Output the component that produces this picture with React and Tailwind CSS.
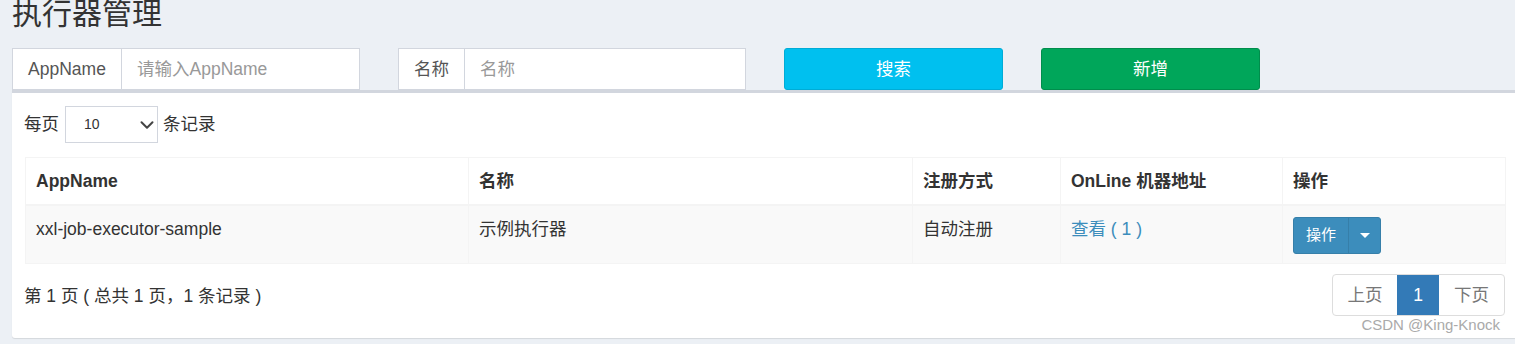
import { ChevronDown } from "lucide-react";

const font = { fontFamily: '"Liberation Sans", Arial, "Noto Sans CJK SC", sans-serif' };

const columns = [
    { label: "AppName", width: 443 },
    { label: "名称", width: 444 },
    { label: "注册方式", width: 148 },
    { label: "OnLine 机器地址", width: 222 },
    { label: "操作", width: 223 },
];

const SearchGroup = ({ addon, addonWidth, placeholder }) => (
    <div className="flex w-[348px] h-[42px] border border-[#d2d6de] bg-white">
        <div className={`flex items-center justify-center border-r border-[#d2d6de] text-[17.5px] text-[#555] ${addonWidth}`}>
            {addon}
        </div>
        <div className="flex-1 flex items-center pl-[15px] text-[17.5px] text-[#999]">{placeholder}</div>
    </div>
);

const App = () => {
    return (
        <div className="w-[1515px] h-[344px] overflow-hidden bg-[#ecf0f5] text-[#333]" style={font}>
            <div className="h-[48px] pl-[12px] overflow-hidden">
                <h1 className="relative -top-[2px] text-[30px] leading-[32px] text-[#333]">执行器管理</h1>
            </div>

            <div className="flex pl-[12px] h-[42px] relative z-10">
                <SearchGroup addon="AppName" addonWidth="w-[109px]" placeholder="请输入AppName" />
                <div className="ml-[38px]">
                    <SearchGroup addon="名称" addonWidth="w-[66px]" placeholder="名称" />
                </div>
                <button className="ml-[38px] w-[219px] h-[42px] rounded-[3px] bg-[#00c0ef] border border-[#00acd6] text-white text-[17.5px]">搜索</button>
                <button className="ml-[38px] w-[219px] h-[42px] rounded-[3px] bg-[#00a65a] border border-[#008d4c] text-white text-[17.5px]">新增</button>
            </div>

            <div className="ml-[12px] w-[1505px] h-[248px] bg-white border-t-[3px] border-[#d2d6de] rounded-b-[3px] shadow-[0_1px_1px_rgba(0,0,0,0.1)] px-[12px] pt-[13px]">
                <div className="flex items-center h-[37px] text-[17.5px]">
                    <span>每页</span>
                    <div className="ml-[6px] w-[93px] h-[37px] border border-[#d2d6de] flex items-center pl-[18px] text-[14px]">
                        <span className="flex-1">10</span>
                        <ChevronDown size={22} strokeWidth={2.2} className="text-[#444] -mr-[1px]" />
                    </div>
                    <span className="ml-[5px]">条记录</span>
                </div>

                <table className="mt-[14px] ml-[1px] table-fixed border-collapse border border-[#f4f4f4] text-[17.5px]" style={{ width: 1480 }}>
                    <colgroup>
                        {columns.map((c) => (
                            <col key={c.label} style={{ width: c.width }} />
                        ))}
                    </colgroup>
                    <thead>
                        <tr className="border-b-2 border-[#f4f4f4]">
                            {columns.map((c) => (
                                <th key={c.label} className="h-[47px] text-left font-bold px-[10px] pt-[1px] border border-[#f4f4f4] leading-[25px]">
                                    {c.label}
                                </th>
                            ))}
                        </tr>
                    </thead>
                    <tbody>
                        <tr className="bg-[#f9f9f9] align-top">
                            <td className="h-[59px] px-[10px] pt-[11px] border border-[#f4f4f4] leading-[25px]">xxl-job-executor-sample</td>
                            <td className="px-[10px] pt-[11px] border border-[#f4f4f4] leading-[25px]">示例执行器</td>
                            <td className="px-[10px] pt-[11px] border border-[#f4f4f4] leading-[25px]">自动注册</td>
                            <td className="px-[10px] pt-[11px] border border-[#f4f4f4] leading-[25px] text-[#3c8dbc]">查看 ( 1 )</td>
                            <td className="px-[10px] pt-[11px] border border-[#f4f4f4]">
                                <div className="flex w-[88px] h-[37px] rounded-[3px] bg-[#3c8dbc] border border-[#367fa9] text-white text-[15px]">
                                    <div className="w-[55px] flex items-center justify-center border-r border-[#367fa9]">操作</div>
                                    <div className="flex-1 flex items-center justify-center">
                                        <span className="w-0 h-0 border-l-[5px] border-r-[5px] border-t-[5px] border-l-transparent border-r-transparent border-t-white" />
                                    </div>
                                </div>
                            </td>
                        </tr>
                    </tbody>
                </table>

                <div className="flex justify-between mt-[11px]">
                    <div className="text-[17.5px] leading-[25px] mt-[9px]">第 1 页 ( 总共 1 页，1 条记录 )</div>
                    <div className="relative -mt-[1px]">
                        <div className="flex h-[42px] border border-[#ddd] rounded-[4px] overflow-hidden text-[17.5px] text-[#777]">
                            <div className="w-[64px] flex items-center justify-center">上页</div>
                            <div className="w-[42px] flex items-center justify-center bg-[#337ab7] text-white">1</div>
                            <div className="w-[65px] flex items-center justify-center">下页</div>
                        </div>
                        <div className="absolute right-[5px] top-[42px] text-[15px] leading-[17px] text-[#aaa] whitespace-nowrap">
                            CSDN @King-Knock
                        </div>
                    </div>
                </div>
            </div>
        </div>
    );
};

export default App;
